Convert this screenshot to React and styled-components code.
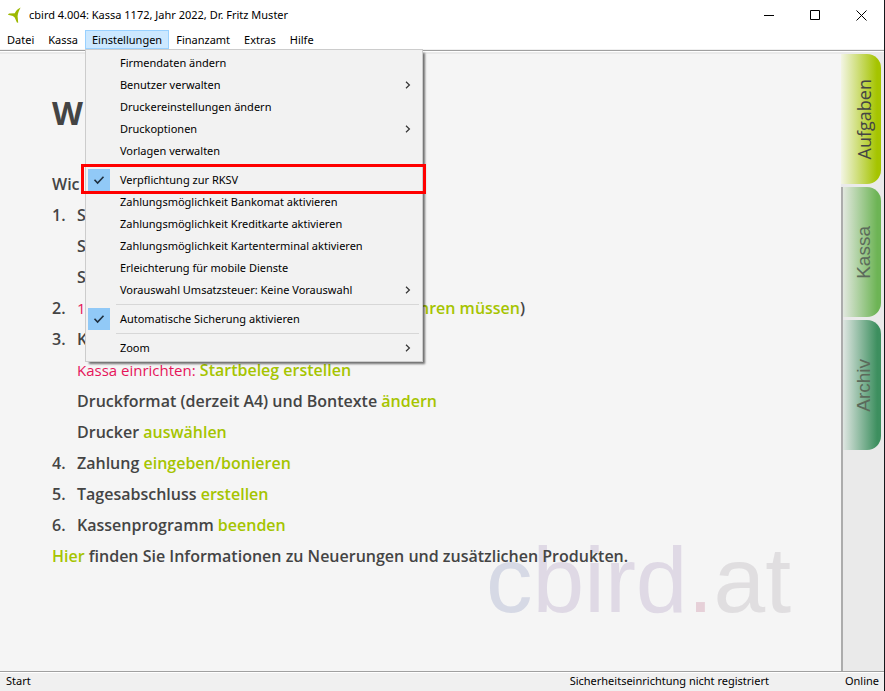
import React from "react";
import styled, { createGlobalStyle, css } from "styled-components";

const Global = createGlobalStyle`
  *, *::before, *::after { box-sizing: border-box; }
  html, body, #root { height: 100%; }
  body {
    margin: 0;
    background: #ffffff;
    color: #000000;
    font-family: "Noto Sans", "Open Sans", sans-serif;
    font-size: 11px;
    line-height: 16px;
  }
  button { font: inherit; color: inherit; border: 0; margin: 0; padding: 0; background: none; }
`;

const Window = styled.div`
  position: relative;
  display: flex;
  flex-direction: column;
  min-height: 100vh;
  border-right: 1px solid #16181c;
`;

const TitleBar = styled.header`
  display: flex;
  align-items: center;
  height: 30px;
  padding-left: 7px;
  background: #ffffff;
`;

const AppIcon = styled.svg`
  width: 16px;
  height: 16px;
  margin-right: 6px;
`;

const Title = styled.h1`
  flex: 1;
  margin: 0;
  font-size: 11px;
  font-weight: 400;
`;

const WindowButton = styled.button`
  display: grid;
  place-items: center;
  width: 46px;
  height: 28px;
`;

const MenuBar = styled.nav`
  display: flex;
  height: 20px;
  background: #ffffff;
  border-bottom: 1px solid #f0f0f0;
`;

const MenuSlot = styled.div`
  position: relative;
  display: flex;
`;

const MenuTitle = styled.button`
  height: 19px;
  padding: 0 6px;
  border: 1px solid ${(p) => (p.$open ? "#99d1ff" : "transparent")};
  background: ${(p) => (p.$open ? "#cce8ff" : "transparent")};
  line-height: 16px;
`;

const Menu = styled.div`
  position: absolute;
  z-index: 2;
  top: 19px;
  left: 0;
  width: 338px;
  padding: 2px;
  border: 1px solid #cccccc;
  background: #f2f2f2;
  box-shadow: 3px 3px 2px -1px rgba(0, 0, 0, 0.55);
`;

const MenuItem = styled.button`
  display: grid;
  grid-template-columns: 22px 1fr 15px;
  column-gap: 10px;
  align-items: center;
  width: 100%;
  height: 22px;
  text-align: left;
  white-space: nowrap;
`;

const CheckCell = styled.span`
  display: grid;
  place-items: center;
  height: 22px;
  background: ${(p) => (p.$checked ? "#91c9f7" : "transparent")};
`;

const MenuSeparator = styled.hr`
  height: 1px;
  margin: 3px 1px 3px 28px;
  border: 0;
  background: #d7d7d7;
`;

const Highlight = styled.div`
  position: absolute;
  top: 114px;
  left: -5px;
  width: 345px;
  height: 30px;
  border: 3px solid #ff0000;
  pointer-events: none;
`;

const Body = styled.div`
  display: flex;
  flex: 1;
  border-top: 1px solid #a0a0a0;
  background: #eaeaea;
  box-shadow: inset 0 1px 0 #ffffff;
  padding-top: 3px;
`;

const Main = styled.main`
  position: relative;
  flex: 1;
  padding: 40px 52px;
  background: #f5f5f5;
  color: #444444;
  font-family: "Open Sans", "Noto Sans", sans-serif;
  font-size: 16px;
  font-weight: 600;
  line-height: 31px;
`;

const Heading = styled.h2`
  margin: 0 0 37px;
  font-size: 32px;
  line-height: 38px;
`;

const Line = styled.p`
  position: relative;
  z-index: 1;
  margin: 0;
`;

const Steps = styled.ol`
  position: relative;
  z-index: 1;
  margin: 0;
  padding: 0;
  list-style: none;
`;

const Step = styled.li`
  display: grid;
  grid-template-columns: 25px 1fr;
`;

const Note = styled.span`
  color: #e6145a;
  font-size: 15px;
  font-weight: 400;
`;

const SplitLine = styled.div`
  display: grid;
  grid-template-columns: 342px 1fr;
`;

const Action = styled.a`
  color: #a5c400;
  text-decoration: none;
`;

const Watermark = styled.div`
  position: absolute;
  right: 50px;
  bottom: 39px;
  font-family: "Liberation Sans", Arial, sans-serif;
  font-size: 93px;
  font-weight: 400;
  line-height: 104px;
  color: ${(p) => p.$color};
`;

const Tint = styled.span`
  color: ${(p) => p.$color};
`;

const Side = styled.aside`
  display: flex;
  flex-direction: column;
  width: 43px;
`;

const sideLine = css`border-left: 2px solid #acacac;`;

const TabSlot = styled.div`
  padding: 0 3px 3px 0;
  &:not(:first-child) { ${sideLine} }
`;

const SideFill = styled.div`
  flex: 1;
  ${sideLine}
`;

const Tab = styled.button`
  display: flex;
  align-items: center;
  justify-content: center;
  width: 100%;
  height: 130px;
  padding-left: ${(p) => (p.$active ? 6 : 4)}px;
  border-radius: 0 14px 14px 0;
  background: linear-gradient(to right, ${(p) => p.$from}, ${(p) => p.$to} 90%);
  color: ${(p) => (p.$active ? "#444444" : "#5b6a5b")};
  font-family: ${(p) => (p.$active ? '"Open Sans"' : '"Liberation Sans"')}, sans-serif;
  font-size: ${(p) => (p.$active ? 18 : 19)}px;
  line-height: 24px;
`;

const TabText = styled.span`
  writing-mode: vertical-rl;
  transform: rotate(180deg);
`;

const StatusBar = styled.footer`
  display: flex;
  height: 20px;
  padding: 1px 5px 0 6px;
  border-top: 1px solid #a0a0a0;
  background: #f0f0f0;
  box-shadow: inset 0 1px 0 #ffffff;
`;

const StatusText = styled.span`
  flex: ${(p) => (p.$grow ? 1 : "none")};
  margin-right: ${(p) => p.$gap || 0}px;
`;

const Check = () => (
  <svg width="12" height="10" viewBox="0 0 12 10" fill="none" stroke="#1f2f3f" strokeWidth="1.6" aria-hidden="true">
    <path d="M1.5 4.8 4.6 8 10.5 1.8" />
  </svg>
);

const Arrow = () => (
  <svg width="6" height="8" viewBox="0 0 6 8" fill="none" stroke="#333333" strokeWidth="1.2" aria-hidden="true">
    <path d="M1 .8 4.4 4 1 7.2" />
  </svg>
);

const menuItems = [
  { text: "Firmendaten ändern" },
  { text: "Benutzer verwalten", sub: true },
  { text: "Druckereinstellungen ändern" },
  { text: "Druckoptionen", sub: true },
  { text: "Vorlagen verwalten" },
  null,
  { text: "Verpflichtung zur RKSV", checked: true },
  { text: "Zahlungsmöglichkeit Bankomat aktivieren" },
  { text: "Zahlungsmöglichkeit Kreditkarte aktivieren" },
  { text: "Zahlungsmöglichkeit Kartenterminal aktivieren" },
  { text: "Erleichterung für mobile Dienste" },
  { text: "Vorauswahl Umsatzsteuer: Keine Vorauswahl", sub: true },
  null,
  { text: "Automatische Sicherung aktivieren", checked: true },
  null,
  { text: "Zoom", sub: true },
];

const SettingsMenu = () => (
  <Menu role="menu" aria-label="Einstellungen">
    {menuItems.map((item, i) =>
      item ? (
        <MenuItem
          key={item.text}
          type="button"
          role={item.checked ? "menuitemcheckbox" : "menuitem"}
          aria-checked={item.checked}
          aria-haspopup={item.sub ? "menu" : undefined}
        >
          <CheckCell $checked={item.checked}>{item.checked && <Check />}</CheckCell>
          <span>{item.text}</span>
          {item.sub && <Arrow />}
        </MenuItem>
      ) : (
        <MenuSeparator key={i} />
      )
    )}
    <Highlight />
  </Menu>
);

const menus = ["Datei", "Kassa", "Einstellungen", "Finanzamt", "Extras", "Hilfe"];

const tabs = [
  { text: "Aufgaben", from: "#f3f5e4", to: "#a5c400", active: true },
  { text: "Kassa", from: "#e2e8df", to: "#6db455" },
  { text: "Archiv", from: "#dfe6e2", to: "#3d8f5f" },
];

export default function App() {
  return (
    <>
      <Global />
      <Window>
        <TitleBar>
          <AppIcon viewBox="0 0 16 16" aria-hidden="true">
            <path fill="#9db800" d="M13.6.4C10.6 1.8 8.6 4 7.8 6.2L2 6.6.9 7.8l5 1.2 1.8 1.6 2.2 4.9 1.3.2-.6-6.5C10.9 6.3 12 3.2 13.6.4z" />
          </AppIcon>
          <Title>cbird 4.004: Kassa 1172, Jahr 2022, Dr. Fritz Muster</Title>
          <WindowButton type="button" aria-label="Minimieren">
            <svg width="11" height="11" stroke="#000" fill="none"><path d="M0 5.5h10" /></svg>
          </WindowButton>
          <WindowButton type="button" aria-label="Maximieren">
            <svg width="11" height="11" stroke="#000" fill="none"><path d="M.5.5h9v9h-9z" /></svg>
          </WindowButton>
          <WindowButton type="button" aria-label="Schließen">
            <svg width="11" height="11" stroke="#000" fill="none"><path d="m.5.5 10 10m0-10-10 10" /></svg>
          </WindowButton>
        </TitleBar>
        <MenuBar>
          {menus.map((name) => {
            const open = name === "Einstellungen";
            return (
              <MenuSlot key={name}>
                <MenuTitle type="button" $open={open} aria-expanded={open}>{name}</MenuTitle>
                {open && <SettingsMenu />}
              </MenuSlot>
            );
          })}
        </MenuBar>
        <Body>
          <Main>
            <Watermark $color="#dfd9e5" aria-hidden="true">
              <Tint $color="#d6d9e5">c</Tint>bird<Tint $color="#e6d0d8">.</Tint><Tint $color="#e0dee0">at</Tint>
            </Watermark>
            <Heading>W</Heading>
            <Line>Wic</Line>
            <Steps>
              <Step><span>1.</span><div><div>S</div><div>S</div><div>S</div></div></Step>
              <Step>
                <span>2.</span>
                <SplitLine><Note>1</Note><span><Action href="#pruefen">hren müssen</Action>)</span></SplitLine>
              </Step>
              <Step>
                <span>3.</span>
                <div>
                  <div>K</div>
                  <div><Note>Kassa einrichten:</Note> <Action href="#startbeleg">Startbeleg erstellen</Action></div>
                  <div>Druckformat (derzeit A4) und Bontexte <Action href="#format">ändern</Action></div>
                  <div>Drucker <Action href="#drucker">auswählen</Action></div>
                </div>
              </Step>
              <Step><span>4.</span><div>Zahlung <Action href="#zahlung">eingeben/bonieren</Action></div></Step>
              <Step><span>5.</span><div>Tagesabschluss <Action href="#abschluss">erstellen</Action></div></Step>
              <Step><span>6.</span><div>Kassenprogramm <Action href="#beenden">beenden</Action></div></Step>
            </Steps>
            <Line><Action href="#hier">Hier</Action> finden Sie Informationen zu Neuerungen und zusätzlichen Produkten.</Line>
          </Main>
          <Side>
            {tabs.map((t) => (
              <TabSlot key={t.text}>
                <Tab type="button" $active={t.active} $from={t.from} $to={t.to}><TabText>{t.text}</TabText></Tab>
              </TabSlot>
            ))}
            <SideFill />
          </Side>
        </Body>
        <StatusBar>
          <StatusText $grow>Start</StatusText>
          <StatusText $gap={76}>Sicherheitseinrichtung nicht registriert</StatusText>
          <StatusText>Online</StatusText>
        </StatusBar>
      </Window>
    </>
  );
}
